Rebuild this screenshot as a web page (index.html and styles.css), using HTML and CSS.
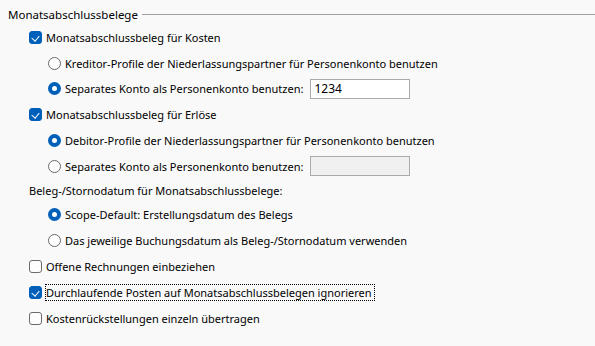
FILE: index.html
```html
<!DOCTYPE html>
<html lang="de">
  <head>
    <meta charset="utf-8">
    <title>Monatsabschlussbelege</title>
    <link rel="stylesheet" href="styles.css">
  </head>
  <body>
    <div class="group">
      <div class="group-title">
        <span>Monatsabschlussbelege</span>
        <span class="rule"></span>
      </div>

      <div class="row check-row">
        <span class="box checked"></span>
        <span class="text">Monatsabschlussbeleg für Kosten</span>
      </div>
      <div class="row radio-row">
        <span class="radio"></span>
        <span class="text">Kreditor-Profile der Niederlassungspartner für Personenkonto benutzen</span>
      </div>
      <div class="row radio-row short">
        <span class="radio selected"></span>
        <span class="text">Separates Konto als Personenkonto benutzen:</span>
        <input class="field" type="text" value="1234">
      </div>

      <div class="row check-row">
        <span class="box checked"></span>
        <span class="text">Monatsabschlussbeleg für Erlöse</span>
      </div>
      <div class="row radio-row">
        <span class="radio selected"></span>
        <span class="text">Debitor-Profile der Niederlassungspartner für Personenkonto benutzen</span>
      </div>
      <div class="row radio-row">
        <span class="radio"></span>
        <span class="text">Separates Konto als Personenkonto benutzen:</span>
        <input class="field" type="text" value="" disabled>
      </div>

      <div class="row label-row">
        <span class="text">Beleg-/Stornodatum für Monatsabschlussbelege:</span>
      </div>
      <div class="row radio-row">
        <span class="radio selected"></span>
        <span class="text">Scope-Default: Erstellungsdatum des Belegs</span>
      </div>
      <div class="row radio-row">
        <span class="radio"></span>
        <span class="text">Das jeweilige Buchungsdatum als Beleg-/Stornodatum verwenden</span>
      </div>

      <div class="row check-row">
        <span class="box"></span>
        <span class="text">Offene Rechnungen einbeziehen</span>
      </div>
      <div class="row check-row">
        <span class="box checked"></span>
        <span class="text focused">Durchlaufende Posten auf Monatsabschlussbelegen ignorieren</span>
      </div>
      <div class="row check-row">
        <span class="box"></span>
        <span class="text">Kostenrückstellungen einzeln übertragen</span>
      </div>
    </div>
  </body>
</html>
```

FILE: styles.css
```css
body {
  margin: 0;
  background: #f9f9f9;
  color: #000;
  font-family: "Noto Sans", "Open Sans", sans-serif;
  font-size: 11px;
}
.group {
  padding: 4px 0 0 8px;
}
.group-title {
  display: flex;
  align-items: center;
  height: 20px;
  gap: 4px;
  font-size: 11.5px;
}
.group-title .rule {
  flex: 1;
  border-top: 1px solid #a0a0a0;
}
.row {
  display: flex;
  align-items: center;
  height: 26px;
  gap: 4px;
}
.row.short {
  height: 25px;
}
.check-row {
  padding-left: 21px;
}
.radio-row {
  padding-left: 40px;
}
.label-row {
  padding-left: 21px;
  height: 22px;
}
.text {
  white-space: nowrap;
  line-height: 15px;
}
.focused {
  outline: 1px dotted #000;
  outline-offset: 0;
  padding-right: 2px;
}
.box {
  box-sizing: border-box;
  width: 13px;
  height: 13px;
  border: 1px solid #6b6b6b;
  border-radius: 3px;
  background: #fdfdfd;
  position: relative;
}
.box.checked {
  background: #005fb8;
  border-color: #005fb8;
}
.box.checked::after {
  content: "";
  position: absolute;
  left: 3px;
  top: 2px;
  width: 4px;
  height: 6px;
  border: solid #fff;
  border-width: 0 1px 1px 0;
  transform: rotate(40deg);
}
.radio {
  box-sizing: border-box;
  width: 13px;
  height: 13px;
  border: 1px solid #6b6b6b;
  border-radius: 50%;
  background: #fdfdfd;
}
.radio.selected {
  border: 4px solid #005fb8;
  background: #fff;
}
.field {
  box-sizing: border-box;
  width: 100px;
  height: 20px;
  margin-left: 3px;
  padding: 0 3px;
  border: 1px solid #ababab;
  background: #fff;
  font: inherit;
  font-size: 12px;
  color: #000;
  outline: none;
}
.field:disabled {
  background: #f0f0f0;
}
```
